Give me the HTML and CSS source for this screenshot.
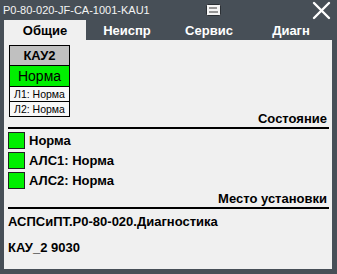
FILE: index.html
```html
<!DOCTYPE html>
<html lang="ru">
<head>
  <meta charset="UTF-8">
  <title>P0-80-020-JF-CA-1001-KAU1</title>
  <link rel="stylesheet" href="styles.css">
</head>
<body>
  <div class="titlebar">
    <span class="title">P0-80-020-JF-CA-1001-KAU1</span>
    <svg class="icon-note" width="15" height="12" viewBox="0 0 15 12">
      <rect x="0.5" y="0.5" width="14" height="11" rx="1" fill="#f4f4f4" stroke="#2a2f34"/>
      <line x1="3" y1="4" x2="11" y2="4" stroke="#555" stroke-width="1.2"/>
      <line x1="3" y1="8" x2="12" y2="8" stroke="#555" stroke-width="1.2"/>
    </svg>
    <svg class="icon-close" width="19" height="19" viewBox="0 0 19 19">
      <path d="M2 2 L17 17 M17 2 L2 17" stroke="#fff" stroke-width="2.4" stroke-linecap="round"/>
    </svg>
  </div>
  <div class="tabs">
    <div class="tab active">Общие</div>
    <div class="tab">Неиспр</div>
    <div class="tab">Сервис</div>
    <div class="tab">Диагн</div>
  </div>
  <div class="panel">
    <div class="kau">
      <div class="kau-head">КАУ2</div>
      <div class="kau-state">Норма</div>
      <div class="kau-line">Л1: Норма</div>
      <div class="kau-line">Л2: Норма</div>
    </div>
    <div class="section">Состояние</div>
    <div class="status first"><span class="led"></span>Норма</div>
    <div class="status"><span class="led"></span>АЛС1: Норма</div>
    <div class="status"><span class="led"></span>АЛС2: Норма</div>
    <div class="section place">Место установки</div>
    <div class="info first">АСПСиПТ.Р0-80-020.Диагностика</div>
    <div class="info">КАУ_2 9030</div>
  </div>
</body>
</html>
```

FILE: styles.css
```css
body { margin: 0; background: #474f57; font-family: 'Liberation Sans', Arial, sans-serif; color: #000; width: 337px; height: 274px; overflow: hidden; }
.titlebar { display: flex; align-items: center; height: 20px; padding-left: 3px; color: #f4f4f4; }
.title { flex: 1; font-size: 11px; }
.icon-note { margin-right: 91px; }
.icon-close { margin-right: 6px; }
.tabs { display: grid; grid-template-columns: repeat(4, 1fr); margin: 0 5px 0 4px; height: 20px; }
.tab { display: flex; align-items: center; justify-content: center; font-size: 13px; font-weight: bold; color: #fff; }
.tab.active { background: #f0f0f0; color: #000; }
.panel { background: #f0f0f0; margin: 0 5px 0 4px; height: 229px; padding: 5px 3px 0 4px; box-sizing: border-box; }
.kau { width: 59px; margin-left: 1px; border: 1px solid #000; text-align: center; }
.kau-head { height: 19px; line-height: 19px; background: #c0c0c0; font-weight: bold; font-size: 13px; border-bottom: 1px solid #000; }
.kau-state { height: 20px; line-height: 20px; background: #00f000; font-size: 14px; border-bottom: 1px solid #000; }
.kau-line { height: 14px; line-height: 14px; font-size: 10.5px; background: #f8f8f8; }
.kau-line + .kau-line { border-top: 1px solid #000; }
.section { height: 15px; line-height: 15px; text-align: right; font-weight: bold; font-size: 13px; border-bottom: 2px solid #000; padding: 0 2px 1px 0; margin-top: -6px; }
.section.place { margin-top: 1px; }
.status { display: flex; align-items: center; gap: 4px; height: 20px; font-size: 13px; font-weight: bold; }
.status.first { margin-top: 1px; }
.led { width: 15px; height: 15px; background: #00f000; border: 1px solid #222; }
.info { font-size: 13px; font-weight: bold; height: 18px; line-height: 18px; margin-top: 8px; }
.info.first { margin-top: 4px; }
```
